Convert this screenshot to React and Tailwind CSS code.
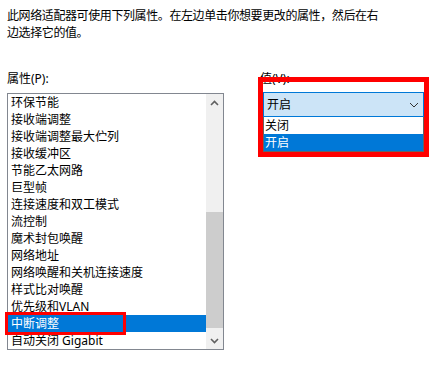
import React from "react";

const items = [
  "环保节能",
  "接收端调整",
  "接收端调整最大伫列",
  "接收缓冲区",
  "节能乙太网路",
  "巨型帧",
  "连接速度和双工模式",
  "流控制",
  "魔术封包唤醒",
  "网络地址",
  "网络唤醒和关机连接速度",
  "样式比对唤醒",
  "优先级和VLAN",
  "中断调整",
  "自动关闭 Gigabit",
];

export default function App() {
  return (
    <div className="relative w-[431px] h-[389px] bg-white text-black font-['Noto_Sans','Noto_Sans_CJK_SC',sans-serif] text-[12px] overflow-hidden">
      <div className="pl-[7px] pt-[7px] leading-[17px] tracking-[-0.4px]">
        <div className="whitespace-nowrap">此网络适配器可使用下列属性。在左边单击你想要更改的属性，然后在右</div>
        <div className="whitespace-nowrap">边选择它的值。</div>
      </div>

      <div className="flex mt-[29px]">
        {/* left column */}
        <div className="pl-[7px] w-[251px] flex flex-col">
          <div className="leading-[17px] h-[17px]">属性(P):</div>
          <div className="mt-[6px] w-[217px] h-[257px] border border-[#828790] flex">
            <div className="w-[198px] flex flex-col">
              {items.map((t, i) => (
                <div
                  key={t}
                  className={
                    i === 13
                      ? "h-[17px] leading-[17px] pl-[3px] whitespace-nowrap bg-[#0078d7] text-white"
                      : "h-[17px] leading-[17px] pl-[3px] whitespace-nowrap"
                  }
                >
                  {t}
                </div>
              ))}
            </div>
            <div className="w-[17px] bg-[#f0f0f0] flex flex-col">
              <div className="h-[17px] flex items-center justify-center">
                <svg width="9" height="6" viewBox="0 0 9 6">
                  <path d="M1 5 L4.5 1.5 L8 5" fill="none" stroke="#606060" strokeWidth="1.6" />
                </svg>
              </div>
              <div className="flex-1 flex flex-col">
                <div className="h-[101px]" />
                <div className="h-[116px] bg-[#cdcdcd]" />
              </div>
              <div className="h-[17px] flex items-center justify-center">
                <svg width="9" height="6" viewBox="0 0 9 6">
                  <path d="M1 1 L4.5 4.5 L8 1" fill="none" stroke="#606060" strokeWidth="1.6" />
                </svg>
              </div>
            </div>
          </div>
        </div>

        {/* right column */}
        <div className="flex flex-col pl-[9px]">
          <div className="leading-[17px] h-[17px]">值(V):</div>
          <div className="mt-[5px] ml-[3px] w-[161px]">
            <div className="h-[25px] border border-[#0078d7] bg-[#cce4f7] flex items-center justify-between pl-[3px] pr-[4px]">
              <span className="leading-[17px]">开启</span>
              <svg width="10" height="6" viewBox="0 0 10 6">
                <path d="M1 1 L5 5 L9 1" fill="none" stroke="#333" strokeWidth="1" />
              </svg>
            </div>
            <div className="border-x border-b border-[#646464] bg-white">
              <div className="h-[17px] leading-[17px] pl-[1px]">关闭</div>
              <div className="h-[17px] leading-[17px] pl-[1px] bg-[#0078d7] text-white">开启</div>
            </div>
          </div>
        </div>
      </div>

      {/* annotation boxes */}
      <div className="absolute left-[258px] top-[77px] w-[171px] h-[80px] border-[5px] border-[#ff0000]" />
      <div className="absolute left-[5px] top-[312px] w-[121px] h-[23px] border-[3px] border-[#ff0000]" />
    </div>
  );
}
